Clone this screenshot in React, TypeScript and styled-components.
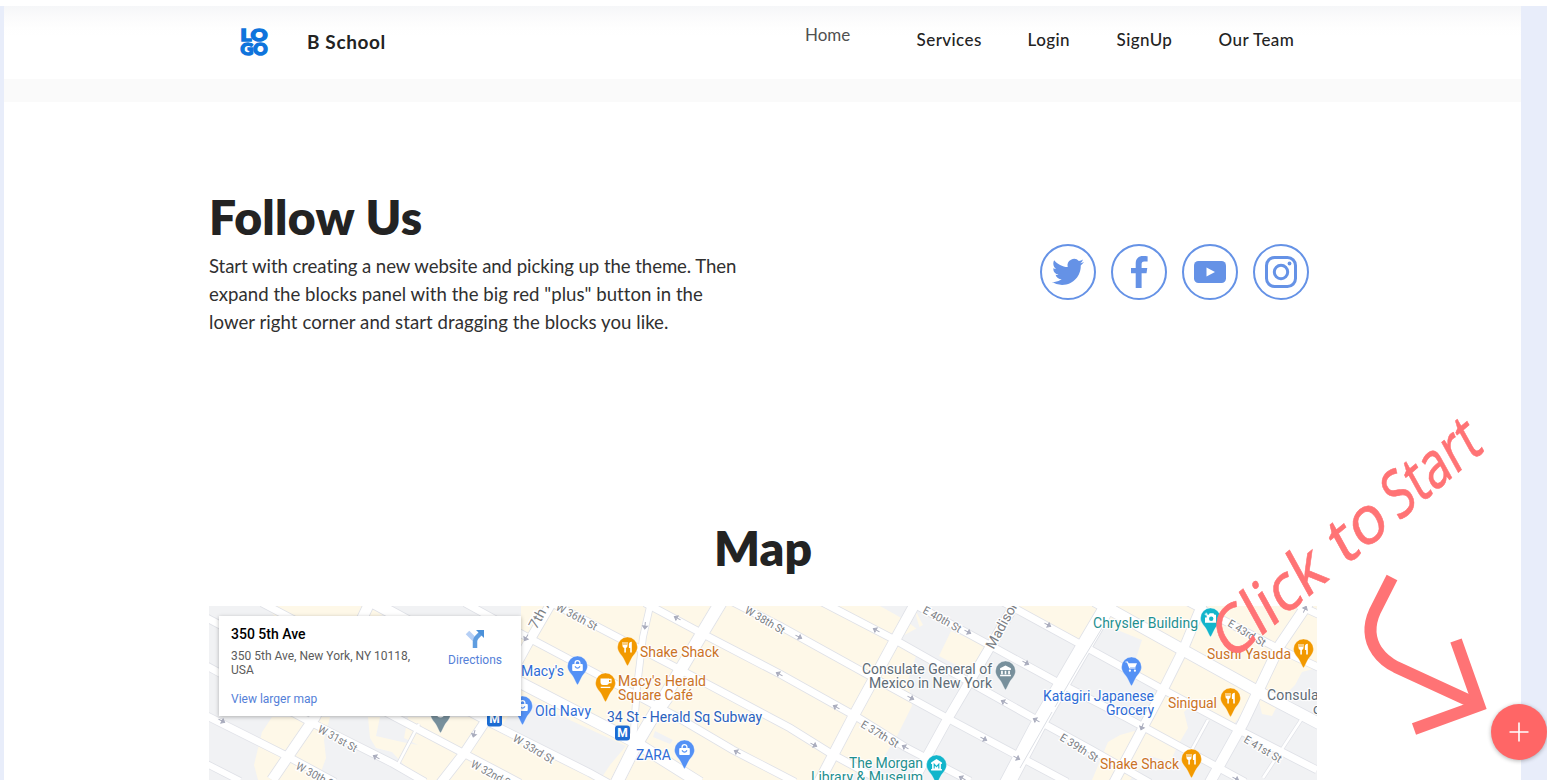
import React from "react";
import styled, { createGlobalStyle } from "styled-components";

const GlobalStyle = createGlobalStyle`
  * { box-sizing: border-box; }
  body { margin: 0; overflow: hidden; background: #fff; font-family: Lato, "Open Sans", sans-serif; color: #232323; }
  h1, h2, p { margin: 0; }
`;

const Screen = styled.div`
  position: relative;
  display: flex;
  flex-direction: column;
  height: 780px;
  overflow: hidden;
`;
const TopStrip = styled.div`
  flex: 0 0 6px;
  background: #fff;
`;
const Workspace = styled.div`
  flex: 1;
  min-height: 0;
  display: grid;
  grid-template-columns: 4px 1fr 26px;
  background: #e8edfa;
`;
const Page = styled.main`
  grid-column: 2;
  background: #fff;
  min-width: 0;
  overflow: hidden;
`;
const Header = styled.header`
  height: 73px;
  display: flex;
  align-items: flex-start;
  padding: 21px 0 0 235px;
  background: linear-gradient(#f5f6f8 0, #fafafb 9px, #fefefe 22px, #fff 30px);
`;
const Brand = styled.div`
  display: flex;
  align-items: center;
  width: 566px;
  gap: 38px;
  height: 30px;
`;
const BrandName = styled.span`
  padding-bottom: 2px;
  font-size: 19px;
  font-weight: 700;
  letter-spacing: 0.62px;
  white-space: nowrap;
`;
const Nav = styled.nav`
  display: flex;
  font-size: 17px;
  line-height: 24px;
`;
const NavItem = styled.a<{ $width: number; $light?: boolean }>`
  width: ${(p) => p.$width}px;
  font-weight: ${(p) => (p.$light ? 400 : 500)};
  color: ${(p) => (p.$light ? "#505050" : "#232323")};
  padding-top: ${(p) => (p.$light ? 0 : 5)}px;
  margin-top: -4px;
  letter-spacing: ${(p) => (p.$light ? 0 : 0.42)}px;
  white-space: nowrap;
`;
const Band = styled.div`
  height: 23px;
  background: #fafafa;
`;
const Follow = styled.section`
  display: flex;
  justify-content: space-between;
  padding: 86px 212px 0 205px;
  height: 418px;
`;
const Title = styled.h1`
  font-size: 48px;
  line-height: 58px;
  font-weight: 800;
  letter-spacing: 0.25px;
`;
const Copy = styled.p`
  margin-top: 6px;
  font-size: 18.6px;
  line-height: 28px;
  color: #303030;
`;
const CopyLine = styled.span<{ $spacing: number }>`
  display: block;
  white-space: nowrap;
  letter-spacing: ${(p) => p.$spacing}px;
`;
const Socials = styled.div`
  display: flex;
  gap: 15px;
  margin-top: 56px;
`;
const SocialLink = styled.a`
  width: 56px;
  height: 56px;
  display: flex;
  align-items: center;
  justify-content: center;
  border: 2px solid #6592e6;
  border-radius: 50%;
  color: #6592e6;
`;
const MapSection = styled.section`
  display: flex;
  flex-direction: column;
  padding: 0 204px 0 205px;
`;
const MapTitle = styled.h2`
  height: 86px;
  font-size: 48px;
  line-height: 56px;
  font-weight: 800;
  text-align: center;
`;
const MapFrame = styled.div`
  position: relative;
  height: 174px;
  overflow: hidden;
  font-family: Roboto, sans-serif;
  svg { display: block; }
`;
const PlaceCard = styled.div`
  position: absolute;
  left: 10px;
  top: 10px;
  width: 302px;
  height: 100px;
  display: flex;
  justify-content: space-between;
  padding: 10px 19px 0 12px;
  background: #fff;
  box-shadow: 0 1px 4px rgba(0, 0, 0, 0.28);
`;
const PlaceInfo = styled.div`
  width: 190px;
  display: flex;
  flex-direction: column;
`;
const PlaceName = styled.strong`
  font-size: 14px;
  line-height: 17px;
  font-weight: 500;
  color: #000;
`;
const Address = styled.span`
  margin-top: 6px;
  font-size: 12px;
  line-height: 14px;
  color: #5b5b5b;
`;
const MapLink = styled.a`
  margin-top: 15px;
  font-size: 12px;
  line-height: 14px;
  color: #5480d8;
`;
const Directions = styled.a`
  display: flex;
  flex-direction: column;
  align-items: center;
  padding-top: 2px;
  gap: 2px;
  font-size: 12px;
  line-height: 16px;
  color: #5480d8;
`;
const Hint = styled.svg`
  position: absolute;
  left: 1200px;
  top: 400px;
  font-family: "Noto Sans", "Open Sans", sans-serif;
`;
const AddButton = styled.button`
  position: absolute;
  left: 1491px;
  top: 704px;
  width: 56px;
  height: 56px;
  padding: 0;
  display: flex;
  align-items: center;
  justify-content: center;
  border: 0;
  border-radius: 50%;
  background: #ff6666;
  box-shadow: 0 1px 4px rgba(0, 0, 0, 0.3);
`;

type Pt = [number, number];
const path = (pts: Pt[]) => "M" + pts.map((p) => p.join(",")).join("L");

const blocks: string[] = [
  "265,606 380,606 400,612 368,618 345,640 290,632",
  "262,732 272,717 330,717 324,740 326,758 318,780 258,780 254,765",
  "368,717 430,717 490,717 521,700 521,606 665,606 913,606 923,625 895,640 918,650 908,680 912,706 897,736 882,760 840,780 418,780 392,752 376,748 370,738",
  "951,631 993,648 979,677 939,656",
  "1013,606 1110,606 1080,646",
  "1110,606 1317,606 1317,668 1302,672 1295,685 1280,700 1272,716 1262,714 1257,693 1231,728 1190,706 1184,712 1188,728 1178,745 1170,762 1150,756 1130,780 1092,780 1108,742 1120,735 1145,728 1163,690 1130,676 1142,640 1105,625",
];
const greyBlocks: string[] = [
  "520,697 626,746 610,765 600,780 570,764 500,729",
  "880,606 913,606 921,632 905,620",
  "380,717 408,717 404,738 418,745 402,742 376,736",
  "655,731 673,740 670,744 653,737",
];

const streets: { pts: Pt[]; w: number }[] = [
  { w: 6, pts: [[205, 763], [240, 781]] },
  { w: 7, pts: [[205, 715], [285, 755], [335, 782]] },
  { w: 7, pts: [[205, 665], [312, 723], [392, 763], [425, 782]] },
  { w: 7, pts: [[205, 617], [465, 754], [520, 783]] },
  { w: 7, pts: [[262, 603], [488, 722], [590, 773], [608, 783]] },
  { w: 11, pts: [[372, 602], [521, 683], [633, 741], [700, 783]] },
  { w: 7, pts: [[465, 603], [527, 637], [593, 672], [677, 717], [733, 750], [795, 782]] },
  { w: 7, pts: [[550, 602], [617, 637], [677, 668], [790, 728], [830, 753], [885, 783]] },
  { w: 7, pts: [[645, 603], [703, 634], [780, 674], [857, 717], [905, 747], [970, 781]] },
  { w: 7, pts: [[733, 602], [780, 626], [863, 672], [947, 718], [1020, 757], [1067, 782]] },
  { w: 7, pts: [[822, 602], [897, 641], [980, 688], [1037, 720], [1090, 749], [1150, 783]] },
  { w: 7, pts: [[912, 603], [993, 647], [1057, 682], [1127, 718], [1197, 756], [1245, 782]] },
  { w: 7, pts: [[1003, 602], [1080, 644], [1160, 688], [1237, 729], [1317, 770]] },
  { w: 11, pts: [[1095, 601], [1183, 650], [1257, 691], [1320, 724]] },
  { w: 7, pts: [[1188, 602], [1283, 651], [1320, 668]] },
  { w: 7, pts: [[1298, 605], [1320, 615]] },
  { w: 10, pts: [[370, 602], [315, 717], [272, 780]] },
  { w: 9, pts: [[552, 602], [527, 645], [485, 722], [465, 752], [440, 784]] },
  { w: 6, pts: [[651, 602], [643, 637], [637, 687], [633, 743]] },
  { w: 12, pts: [[721, 602], [700, 637], [633, 750], [616, 784]] },
  { w: 10, pts: [[916, 602], [895, 640], [853, 717], [818, 784]] },
  { w: 9, pts: [[1016, 602], [990, 647], [947, 720], [914, 780]] },
  { w: 15, pts: [[1110, 602], [1080, 653], [1037, 727], [1007, 784]] },
  { w: 9, pts: [[1203, 602], [1183, 650], [1163, 690], [1113, 784]] },
  { w: 10, pts: [[1309, 602], [1280, 645], [1243, 723], [1209, 784]] },
];
const lanes: Pt[][] = [
  [[419, 724], [398, 764]],
  [[671, 700], [640, 742]],
  [[1208, 720], [1190, 753]],
  [[1303, 717], [1263, 778]],
];
const medians: Pt[][] = [
  [[1107, 620], [1080, 664], [1055, 707]],
  [[1052, 712], [1020, 768]],
];

const arrows: [number, number, number][] = [
  [677, 618, 208], [779, 674, 208], [737, 752, 208], [799, 637, 28], [876, 630, 208],
  [836, 707, 208], [814, 745, 28], [911, 698, 28], [968, 632, 28], [1026, 663, 28],
  [905, 747, 208], [984, 739, 28], [1004, 702, 208], [1036, 720, 208], [1048, 625, 28],
  [962, 778, 208], [1017, 758, 28], [1142, 727, 110], [1236, 779, 28], [1305, 609, 295],
  [222, 721, 28], [376, 757, 208], [474, 734, 105], [645, 626, 95], [526, 638, 120],
];

const streetNames: [string, number, number, number, number, number?][] = [
  ["W 31st St", 319, 728, 29, 43],
  ["W 30th St", 297, 765, 28, 44],
  ["W 32nd St", 472, 763, 28, 46],
  ["W 33rd St", 514, 737, 31, 46],
  ["W 36th St", 557, 606, 28, 45],
  ["W 38th St", 746, 609, 30, 44],
  ["E 40th St", 924, 609, 29, 42],
  ["E 37th St", 862, 723, 31, 42],
  ["E 39th St", 1061, 736, 32, 43],
  ["E 41st St", 1245, 738, 31, 42],
  ["E 43rd St", 1229, 622, 31, 42],
  ["7th Ave", 533, 628, -61, 48, 14],
  ["Madison Ave", 990, 648, -61, 80, 14],
];

const BLUE = "#2f6cd6";
const ORANGE = "#cb7326";
const TEAL = "#1f9090";
const SLATE = "#5f6c76";
const labels: [string, number, number, number, string][] = [
  ["Shake Shack", 640, 657, 79, ORANGE],
  ["Macy's", 521, 676, 43, BLUE],
  ["Macy's Herald", 618, 686, 88, ORANGE],
  ["Square Café", 618, 700, 75, ORANGE],
  ["Old Navy", 535, 716, 56, BLUE],
  ["34 St - Herald Sq Subway", 607, 722, 155, "#2a61bd"],
  ["ZARA", 636, 760, 35, BLUE],
  ["Consulate General of", 862, 674, 130, SLATE],
  ["Mexico in New York", 869, 688, 123, SLATE],
  ["The Morgan", 849, 768, 74, TEAL],
  ["Library & Museum", 811, 782, 112, TEAL],
  ["Katagiri Japanese", 1043, 701, 111, BLUE],
  ["Grocery", 1106, 715, 48, BLUE],
  ["Chrysler Building", 1093, 628, 105, TEAL],
  ["Sushi Yasuda", 1207, 659, 84, ORANGE],
  ["Sinigual", 1168, 708, 49, ORANGE],
  ["Shake Shack", 1100, 769, 79, ORANGE],
  ["Consulate", 1267, 700, 64, SLATE],
  ["of", 1313, 714, 13, SLATE],
];

type Glyph = "food" | "bag" | "cup" | "bank" | "camera" | "cart" | "museum" | "dot";
const pins: [number, number, string, Glyph][] = [
  [440.5, 733, "#78909c", "dot"],
  [627.5, 666, "#f29900", "food"],
  [577.5, 685, "#5491f5", "bag"],
  [605.5, 702, "#f29900", "cup"],
  [522.5, 725, "#5491f5", "bag"],
  [684.5, 769, "#5491f5", "bag"],
  [1005.5, 690, "#78909c", "bank"],
  [936.5, 784, "#12b5cb", "museum"],
  [1210.5, 637, "#12b5cb", "camera"],
  [1131.5, 686, "#5491f5", "cart"],
  [1303.5, 668, "#f29900", "food"],
  [1230.5, 717, "#f29900", "food"],
  [1191.5, 778, "#f29900", "food"],
];

function PinGlyph({ kind, color }: { kind: Glyph; color: string }) {
  switch (kind) {
    case "food":
      return (
        <g fill="#fff">
          <path d="M-5-5h1v3h1v-3h1v3h1v-3h1V-1Q0 .7-1.6 1V5.5H-3.2V1Q-5 .5-5-1Z" />
          <path d="M1.4-2.5Q1.5-5 4.3-5.2V5.5H2.7V1H1.4Z" />
        </g>
      );
    case "bag":
      return (
        <g>
          <path d="M-2.4-1.5V-3a2.4 2.4 0 0 1 4.8 0v1.5" fill="none" stroke="#fff" strokeWidth="1.3" />
          <rect x="-5.3" y="-2" width="10.6" height="7" rx="1" fill="#fff" />
          <path d="M-2.5.3Q0 4 2.5.3" fill="none" stroke={color} strokeWidth="1.3" />
        </g>
      );
    case "cup":
      return (
        <g>
          <path d="M-5-4.5H3.5V-1Q3.5 2 1 2H-2.5Q-5 2-5-1Z" fill="#fff" />
          <path d="M3-3.6h2.5v3.2H3" fill="none" stroke="#fff" strokeWidth="1.1" />
          <path d="M-4.8 4.4h9.6" stroke="#fff" strokeWidth="1.3" />
        </g>
      );
    case "bank":
      return (
        <g fill="#fff">
          <path d="M-5.4-2.8L0-5.4 5.4-2.8V-1H-5.4Z" />
          <path d="M-4.4-.3h1.7v3.5h-1.7zM-.8-.3H.8v3.5H-.8zM2.7-.3h1.7v3.5H2.7zM-5.4 3.7H5.4V5.3H-5.4z" />
        </g>
      );
    case "museum":
      return (
        <g>
          <path d="M-5.4-2.5L0-6 5.4-2.5V-1H4.4V4h1v1.4H-5.4V4h1V-1h-1Z" fill="#fff" />
          <path d="M-2.3 3.5V-.8L0 1.6 2.3-.8V3.5" fill="none" stroke={color} strokeWidth="1.1" />
        </g>
      );
    case "camera":
      return (
        <g>
          <path d="M-3.8-3.2h2l1-1.5H3l1 1.5h1.5V4.8H-5.5V-.5h1.7Z" fill="#fff" />
          <path d="M-5.8-3.8h3M-4.3-5.3v3" stroke="#fff" strokeWidth=".9" />
          <circle cx=".7" cy=".7" r="2.2" fill={color} />
        </g>
      );
    case "cart":
      return (
        <g>
          <path d="M-6-5h2l2.2 6H4" fill="none" stroke="#fff" strokeWidth="1.2" />
          <path d="M-3.7-3.7H5.5L3.8.2H-2.2Z" fill="#fff" />
          <circle cx="-1.6" cy="3.7" r="1.1" fill="#fff" />
          <circle cx="3.4" cy="3.7" r="1.1" fill="#fff" />
        </g>
      );
    default:
      return <circle r="3.5" fill="#fff" />;
  }
}

function CityMap() {
  return (
    <svg width="1108" height="174" viewBox="209 606 1108 174">
      <rect x="209" y="606" width="1108" height="174" fill="#f1f2f4" />
      {blocks.map((b) => <polygon key={b} points={b} fill="#fef8e8" />)}
      {greyBlocks.map((b) => <polygon key={b} points={b} fill="#f1f2f4" />)}
      <g fill="none" stroke="#dfe1e7">
        {streets.map((s, i) => <path key={i} d={path(s.pts)} strokeWidth={s.w + 1.6} />)}
        {lanes.map((l, i) => <path key={i} d={path(l)} strokeWidth="4" />)}
      </g>
      <g fill="none" stroke="#fff">
        {streets.map((s, i) => <path key={i} d={path(s.pts)} strokeWidth={s.w} />)}
        {lanes.map((l, i) => <path key={i} d={path(l)} strokeWidth="2.6" />)}
      </g>
      {medians.map((m, i) => <path key={i} d={path(m)} fill="none" stroke="#dcdfe5" strokeWidth="1" />)}
      {arrows.map(([x, y, a], i) => (
        <path key={i} transform={`translate(${x} ${y}) rotate(${a})`} d="M-4 0H2M0-2.4L3 0 0 2.4Z" fill="#a9acbd" stroke="#a9acbd" strokeWidth="1" />
      ))}
      <g fill="#7b7e84" stroke="#fff" strokeWidth="2.5" paintOrder="stroke">
        {streetNames.map(([t, x, y, a, len, size]) => (
          <text key={t} transform={`translate(${x} ${y}) rotate(${a})`} fontSize={size ?? 11} textLength={len} lengthAdjust="spacingAndGlyphs" dy="4">{t}</text>
        ))}
      </g>
      {[[622.5, 733], [494.5, 719]].map(([x, y]) => (
        <g key={x} transform={`translate(${x} ${y})`}>
          <rect x="-7.5" y="-7.5" width="15" height="15" rx="3" fill="#1d6bd2" />
          <text y="4.3" textAnchor="middle" fontSize="12" fontWeight="700" fill="#fff">M</text>
        </g>
      ))}
      {pins.map(([x, y, color, kind]) => (
        <g key={`${x}-${y}`} transform={`translate(${x} ${y})`}>
          <path d="M-10-19a10 10 0 1 1 20 0c0 5-4 7.500-6 11.500C2.300-4.500 1.500-2 0 0c-1.500-2-2.300-4.500-4-7.500C-6-11.500-10-14-10-19Z" fill={color} stroke="#fff" strokeOpacity=".55" strokeWidth=".6" />
          <g transform="translate(0 -19)"><PinGlyph kind={kind} color={color} /></g>
        </g>
      ))}
      <g fontSize="14" stroke="#fff" strokeOpacity=".85" strokeWidth="2.400" strokeLinejoin="round" paintOrder="stroke">
        {labels.map(([t, x, y, len, color]) => (
          <text key={`${t}-${x}`} x={x} y={y} fill={color} textLength={len}>{t}</text>
        ))}
      </g>
    </svg>
  );
}

function Logo() {
  return (
    <svg width="30" height="30" viewBox="0 0 30 30" fontFamily="Lato" fontWeight="900" fontSize="17" fill="#0f74dc" stroke="#0f74dc" strokeWidth="1.500">
      <text x="1.500" y="13.500" textLength="27" lengthAdjust="spacingAndGlyphs">LO</text>
      <text x="1.500" y="27.700" textLength="27" lengthAdjust="spacingAndGlyphs">GO</text>
    </svg>
  );
}

const TwitterIcon = () => (
  <svg width="32" height="32" viewBox="0 0 24 24" fill="currentColor">
    <path d="M23.953 4.570a10 10 0 0 1-2.825.775 4.958 4.958 0 0 0 2.163-2.723c-.951.555-2.005.959-3.127 1.184a4.920 4.920 0 0 0-8.384 4.482C7.690 8.095 4.067 6.130 1.640 3.162a4.822 4.822 0 0 0-.666 2.475c0 1.710.870 3.213 2.188 4.096a4.904 4.904 0 0 1-2.228-.616v.060a4.923 4.923 0 0 0 3.946 4.827 4.996 4.996 0 0 1-2.212.085 4.936 4.936 0 0 0 4.604 3.417 9.867 9.867 0 0 1-6.102 2.105c-.390 0-.779-.023-1.170-.067a13.995 13.995 0 0 0 7.557 2.209c9.053 0 13.998-7.496 13.998-13.985 0-.210 0-.420-.015-.630A9.935 9.935 0 0 0 24 4.590z" />
  </svg>
);
const FacebookIcon = () => (
  <svg width="32" height="32" viewBox="0 0 32 32" fill="currentColor">
    <path d="M12.700 32V17.200H8V12h4.700V7.500C12.700 2.600 15.600 0 20 0c2 0 4 .2 4.600.3v5.200h-3.200c-2.300 0-2.800 1.200-2.800 2.800V12h5.700l-.8 5.200h-4.900V32Z" />
  </svg>
);
const YoutubeIcon = () => (
  <svg width="32" height="32" viewBox="0 0 32 32">
    <rect y="5" width="32" height="22" rx="4.500" fill="currentColor" />
    <path d="M12.500 11.500v9l8.500-4.500Z" fill="#fff" />
  </svg>
);
const InstagramIcon = () => (
  <svg width="32" height="32" viewBox="0 0 32 32" fill="none" stroke="currentColor" strokeWidth="3">
    <rect x="1.500" y="1.500" width="29" height="29" rx="8" />
    <circle cx="16" cy="16" r="6.700" />
    <circle cx="24.500" cy="7.500" r="1.900" fill="currentColor" stroke="none" />
  </svg>
);

export default function App() {
  return (
    <Screen>
      <GlobalStyle />
      <TopStrip />
      <Workspace>
        <Page>
          <Header>
            <Brand>
              <Logo />
              <BrandName>B School</BrandName>
            </Brand>
            <Nav>
              <NavItem $width={111.6} $light>Home</NavItem>
              <NavItem $width={111}>Services</NavItem>
              <NavItem $width={89}>Login</NavItem>
              <NavItem $width={102}>SignUp</NavItem>
              <NavItem $width={90}>Our Team</NavItem>
            </Nav>
          </Header>
          <Band />
          <Follow>
            <div>
              <Title>Follow Us</Title>
              <Copy>
                <CopyLine $spacing={-0.07}>Start with creating a new website and picking up the theme. Then</CopyLine>
                <CopyLine $spacing={0.03}>expand the blocks panel with the big red "plus" button in the</CopyLine>
                <CopyLine $spacing={0.05}>lower right corner and start dragging the blocks you like.</CopyLine>
              </Copy>
            </div>
            <Socials>
              <SocialLink><TwitterIcon /></SocialLink>
              <SocialLink><FacebookIcon /></SocialLink>
              <SocialLink><YoutubeIcon /></SocialLink>
              <SocialLink><InstagramIcon /></SocialLink>
            </Socials>
          </Follow>
          <MapSection>
            <MapTitle>Map</MapTitle>
            <MapFrame>
              <CityMap />
              <PlaceCard>
                <PlaceInfo>
                  <PlaceName>350 5th Ave</PlaceName>
                  <Address>350 5th Ave, New York, NY 10118, USA</Address>
                  <MapLink>View larger map</MapLink>
                </PlaceInfo>
                <Directions>
                  <svg width="22" height="22" viewBox="0 0 22 22" fill="none">
                    <path d="M3.500 4.500L10.500 11.500" stroke="#b5cff5" strokeWidth="5" />
                    <path d="M11 20V13.500Q11 11 13 9L16.500 5.500" stroke="#5f9de0" strokeWidth="4.500" />
                    <path d="M12 2H20V10Z" fill="#4a90d9" />
                  </svg>
                  Directions
                </Directions>
              </PlaceCard>
            </MapFrame>
          </MapSection>
        </Page>
      </Workspace>
      <Hint width="300" height="350" viewBox="1200 400 300 350">
        <g transform="matrix(.777 -.645 .48 .866 1230 662)" fontSize="65" fill="#ff7375" stroke="#ff7375" strokeWidth=".6">
          <text>
            <tspan x="-1" textLength="130" lengthAdjust="spacingAndGlyphs">Click</tspan>{" "}
            <tspan x="147" textLength="61" lengthAdjust="spacingAndGlyphs">to</tspan>{" "}
            <tspan x="217" textLength="111" lengthAdjust="spacingAndGlyphs">Start</tspan>
          </text>
        </g>
        <path d="M1392 577.500L1375 611Q1365 633 1377 651Q1384 661 1396 667L1472 702" fill="none" stroke="#ff7375" strokeWidth="12" />
        <path d="M1456 640.500L1479 705.500 1414 729" fill="none" stroke="#ff7375" strokeWidth="12" />
      </Hint>
      <AddButton aria-label="Add block">
        <svg width="20" height="20" viewBox="0 0 20 20" stroke="#fff" strokeWidth="1.600"><path d="M10 .5V19.500M.5 10H19.500" /></svg>
      </AddButton>
    </Screen>
  );
}
